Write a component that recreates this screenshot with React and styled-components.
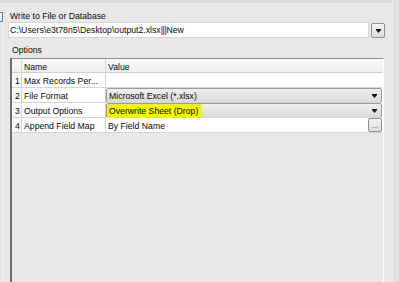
import React from "react";
import styled, { createGlobalStyle } from "styled-components";

const Global = createGlobalStyle`
  html, body { margin: 0; padding: 0; background: #e8e8e8; }
  body { font-family: "Liberation Sans", Arial, sans-serif; font-size: 8.7px; color: #0a0a0a; }
`;

const Window = styled.div`
  width: 399px;
  height: 282px;
  overflow: hidden;
  display: flex;
  background: #e8e8e8;
`;

const Gutter = styled.div`
  width: 8px;
  flex: none;
  display: flex;
  flex-direction: column;
  background: linear-gradient(to right, #e6e6e6 0 2px, #efefef 2px 3px, #e8e8e8 3px);
`;

const GutterTop = styled.div`
  height: 3px;
  background: #dadada;
`;

const EdgeBox = styled.div`
  margin-top: 9px;
  width: 2px;
  height: 8px;
  border: 1px solid #4a86c0;
  border-left: none;
  background: #f4f8fc;
`;

const Content = styled.div`
  flex: 1;
  display: flex;
  flex-direction: column;
  min-width: 0;
`;

const TopStrip = styled.div`
  height: 3px;
  flex: none;
  background: #dadada;
`;

const RightEdge = styled.div`
  width: 6px;
  flex: none;
  background: #e0e0e0;
  border-left: 1px solid #ececec;
`;

const Label = styled.div`
  line-height: 11px;
  height: 11px;
  padding-left: ${(p) => p.$indent || 2}px;
  margin-top: ${(p) => p.$top || 0}px;
  white-space: nowrap;
`;

const PathRow = styled.div`
  display: flex;
  align-items: flex-start;
  gap: 2px;
  padding-right: 7px;
`;

const PathInput = styled.div`
  flex: 1;
  height: 16px;
  box-sizing: border-box;
  background: #ffffff;
  border: 1px solid #d6d6d6;
  line-height: 14px;
  padding-left: 1px;
  white-space: nowrap;
  overflow: hidden;
`;

const Pipes = styled.span`
  color: #a0524f;
  font-weight: bold;
  letter-spacing: -0.5px;
`;

const SmallButton = styled.div`
  width: ${(p) => p.$w || 14}px;
  height: ${(p) => p.$h || 15}px;
  margin-top: ${(p) => p.$top || 0}px;
  box-sizing: border-box;
  border: 1px solid #8e8e8e;
  border-radius: 2px;
  background: linear-gradient(#f4f4f4, #dcdcdc);
  display: flex;
  align-items: center;
  justify-content: center;
  flex: none;
  color: #444;
  font-size: 7px;
  line-height: 7px;
`;

const Grid = styled.div`
  flex: 1;
  margin: 2px 8px 0 2px;
  border-left: 2px solid #6e6e6e;
  border-top: 1px solid #8c8c8c;
  border-right: 1px solid #ffffff;
  background: #e8e8e8;
  display: grid;
  grid-template-columns: 10px 84px 1fr;
  grid-auto-rows: 15px;
  grid-template-rows: 14px;
  align-content: start;
`;

const HeadCell = styled.div`
  background: linear-gradient(#fbfbfb, #eeeeee);
  border-bottom: 1px solid #d0d0d0;
  border-right: 1px solid ${(p) => (p.$last ? "transparent" : "#d8d8d8")};
  padding: 1px 0 0 ${(p) => p.$pad || 2}px;
  line-height: 14px;
  box-sizing: border-box;
  white-space: nowrap;
`;

const Cell = styled.div`
  background: ${(p) => (p.$num ? "#fafafa" : "#ffffff")};
  border-bottom: 1px solid #d5d5d5;
  border-right: 1px solid ${(p) => (p.$last ? "transparent" : "#d5d5d5")};
  padding: ${(p) => (p.$flush ? "0" : "1px 0 0 2px")};
  text-align: ${(p) => (p.$num ? "center" : "left")};
  line-height: 14px;
  box-sizing: border-box;
  white-space: nowrap;
  overflow: hidden;
  display: ${(p) => (p.$flex ? "flex" : "block")};
  align-items: flex-start;
`;

const Combo = styled.div`
  flex: 1;
  height: 15px;
  box-sizing: border-box;
  border: 1px solid #9a9a9a;
  border-radius: 2px;
  background: linear-gradient(#f0f0f0, #dadada);
  display: flex;
  align-items: stretch;
  justify-content: space-between;
  padding-right: 4px;
`;

const ComboText = styled.span`
  padding: 0 4px 0 2px;
  line-height: 14px;
  background: ${(p) => (p.$mark ? "#f3f30c" : "transparent")};
`;

const ArrowWrap = styled.div`
  display: flex;
  align-items: center;
`;

const ValueText = styled.span`
  flex: 1;
  padding: 1px 0 0 2px;
  line-height: 14px;
`;

const Arrow = () => (
  <svg width="5" height="4" viewBox="0 0 5 4">
    <rect x="0" y="0" width="5" height="1" fill="#111" />
    <path d="M0 1 H5 L2.5 4 Z" fill="#111" />
  </svg>
);

const rows = [
  { n: 1, name: "Max Records Per...", kind: "empty" },
  { n: 2, name: "File Format", kind: "combo", value: "Microsoft Excel (*.xlsx)" },
  { n: 3, name: "Output Options", kind: "combo", value: "Overwrite Sheet (Drop)", mark: true },
  { n: 4, name: "Append Field Map", kind: "button", value: "By Field Name" },
];

export default function App() {
  return (
    <>
      <Global />
      <Window>
        <Gutter>
          <GutterTop />
          <EdgeBox />
        </Gutter>
        <Content>
          <TopStrip />
          <Label $top={8} $indent={2}>Write to File or Database</Label>
          <PathRow>
            <PathInput>
              C:\Users\e3t78n5\Desktop\output2.xlsx<Pipes>|||</Pipes>New
            </PathInput>
            <SmallButton $top={1}>
              <Arrow />
            </SmallButton>
          </PathRow>
          <Label $top={7} $indent={4}>Options</Label>
          <Grid>
            <HeadCell />
            <HeadCell $pad={2}>Name</HeadCell>
            <HeadCell $pad={2} $last>Value</HeadCell>
            {rows.map((r) => (
              <React.Fragment key={r.n}>
                <Cell $num>{r.n}</Cell>
                <Cell>{r.name}</Cell>
                {r.kind === "empty" && <Cell $last />}
                {r.kind === "combo" && (
                  <Cell $last $flush $flex>
                    <Combo>
                      <ComboText $mark={r.mark}>{r.value}</ComboText>
                      <ArrowWrap>
                        <Arrow />
                      </ArrowWrap>
                    </Combo>
                  </Cell>
                )}
                {r.kind === "button" && (
                  <Cell $last $flush $flex>
                    <ValueText>{r.value}</ValueText>
                    <SmallButton $w={14} $h={14}>...</SmallButton>
                  </Cell>
                )}
              </React.Fragment>
            ))}
          </Grid>
        </Content>
        <RightEdge />
      </Window>
    </>
  );
}
